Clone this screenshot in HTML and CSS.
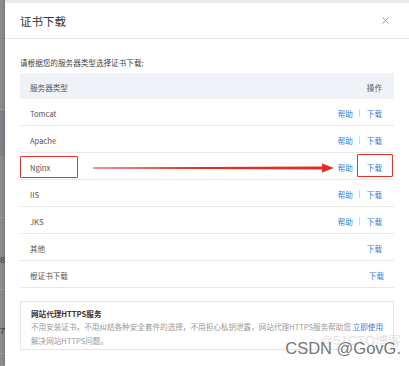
FILE: index.html
```html
<!DOCTYPE html>
<html lang="zh-CN">
<head>
  <meta charset="UTF-8">
  <title>证书下载</title>
  <link rel="stylesheet" href="styles.css">
</head>
<body>
  <div class="screen">
    <div class="backdrop">
      <div class="bd-seg bd-a"></div>
      <div class="bd-seg bd-b"></div>
      <div class="bd-seg bd-c"></div>
      <div class="bd-seg bd-d"><span>8</span></div>
      <div class="bd-seg bd-e"><span>7</span></div>
      <div class="bd-seg bd-f"></div>
    </div>

    <div class="dialog">
      <div class="dialog-head">
        <h2>证书下载</h2>
        <svg class="close" width="7" height="7" viewBox="0 0 7 7">
          <path d="M0.5 0.5 L6.5 6.5 M6.5 0.5 L0.5 6.5" stroke="#9a9a9a" stroke-width="1" fill="none"/>
        </svg>
      </div>

      <div class="dialog-body">
        <p class="tip">请根据您的服务器类型选择证书下载:</p>

        <div class="cert-table">
          <div class="row row-head">
            <span class="name">服务器类型</span>
            <span class="ops">操作</span>
          </div>
          <div class="row">
            <span class="name">Tomcat</span>
            <span class="ops"><a href="#">帮助</a><i class="sep"></i><a href="#">下载</a></span>
          </div>
          <div class="row">
            <span class="name">Apache</span>
            <span class="ops"><a href="#">帮助</a><i class="sep"></i><a href="#">下载</a></span>
          </div>
          <div class="row row-marked">
            <span class="name">Nginx</span>
            <span class="ops"><a href="#">帮助</a><i class="sep hidden"></i><a href="#">下载</a></span>
            <div class="mark mark-name"></div>
            <div class="mark mark-dl"></div>
            <svg class="arrow" width="242" height="12" viewBox="0 0 242 12">
              <polygon points="0,5.6 229,4.6 229,1.5 241,6 229,10.5 229,7.6 0,6.6" fill="#e62b22"/>
            </svg>
          </div>
          <div class="row">
            <span class="name">IIS</span>
            <span class="ops"><a href="#">帮助</a><i class="sep"></i><a href="#">下载</a></span>
          </div>
          <div class="row">
            <span class="name">JKS</span>
            <span class="ops"><a href="#">帮助</a><i class="sep"></i><a href="#">下载</a></span>
          </div>
          <div class="row">
            <span class="name">其他</span>
            <span class="ops"><a href="#">下载</a></span>
          </div>
          <div class="row row-root">
            <span class="name">根证书下载</span>
            <span class="ops"><a href="#">下载</a></span>
          </div>
        </div>

        <div class="proxy">
          <div class="proxy-title">网站代理HTTPS服务</div>
          <div class="proxy-desc">
            <p>不用安装证书，不用纠结各种安全套件的选择，不用担心私钥泄露，网站代理HTTPS服务帮助您<br>解决网站HTTPS问题。</p>
            <a href="#">立即使用</a>
          </div>
        </div>
      </div>

      <div class="watermark">
        <span class="wm-back">@51CTO博客</span>
        <span class="wm-front">CSDN @GovG.</span>
      </div>
    </div>
  </div>
</body>
</html>
```

FILE: styles.css
```css
body {
  margin: 0;
  background: #ffffff;
  font-family: "Noto Sans CJK SC", "Liberation Sans", sans-serif;
  color: #444;
}
.screen {
  display: flex;
  height: 366px;
  overflow: hidden;
}

/* page behind the dialog */
.backdrop {
  width: 5px;
  flex: none;
  display: flex;
  flex-direction: column;
  background: #8b8b8b;
  overflow: hidden;
}
.bd-seg {
  position: relative;
  border-bottom: 1px solid #9c9c9c;
}
.bd-a { height: 109px; }
.bd-b { height: 46px; background: #7f8186; border-bottom: none; }
.bd-c { height: 61px; }
.bd-d { height: 71px; }
.bd-e { height: 63px; }
.bd-f { flex: 1; }
.bd-seg span {
  position: absolute;
  left: 0;
  font-family: "Liberation Sans", sans-serif;
  font-size: 9px;
  color: #3c3c3c;
  line-height: 10px;
}
.bd-d span { top: 37px; }
.bd-e span { top: 36px; }

.dialog {
  flex: 1;
  position: relative;
  border-top: 3px solid #ebebeb;
  box-shadow: -1px 0 2px rgba(0, 0, 0, 0.15);
}

.dialog-head {
  height: 35px;
  display: flex;
  align-items: center;
  justify-content: space-between;
  padding: 0 20px 0 15px;
  border-bottom: 1px solid #e6e6e6;
}
.dialog-head h2 {
  margin: 0;
  font-size: 11.5px;
  font-weight: normal;
  color: #333;
  line-height: 14px;
}
.close {
  display: block;
}

.dialog-body {
  padding: 18px 15px 0 15px;
}
.tip {
  margin: 0 0 4px 0;
  font-size: 7.6px;
  line-height: 12px;
  color: #444;
}

.cert-table {
  font-size: 7.6px;
}
.row {
  position: relative;
  display: flex;
  align-items: center;
  justify-content: space-between;
  height: 26px;
  padding: 0 12px 0 10px;
  border-bottom: 1px solid #e8e8e8;
  color: #555;
}
.row-head {
  background: #eff2f7;
  border-bottom: none;
}
.row .name {
  padding-top: 2px;
}
.ops {
  display: flex;
  align-items: center;
  padding-top: 2px;
}
.ops a {
  color: #2f7ed8;
  text-decoration: none;
}
.sep {
  width: 1px;
  height: 8px;
  margin: 0 7px 0 6px;
  background: #d6d6d6;
}
.sep.hidden {
  background: transparent;
}
.row-root .ops {
  margin-right: -2px;
}

/* red annotations drawn over the Nginx row */
.mark {
  position: absolute;
  border: 1.5px solid #e8312a;
  border-radius: 1px;
}
.mark-name {
  left: 0;
  top: 3px;
  width: 56px;
  height: 20px;
}
.mark-dl {
  left: 337px;
  top: 1px;
  width: 34px;
  height: 21px;
}
.arrow {
  position: absolute;
  left: 73px;
  top: 9px;
}

.proxy {
  margin-top: 13px;
  border: 1px solid #e4e4e4;
  padding: 6px 10px 2px 10px;
}
.proxy-title {
  font-size: 7.6px;
  font-weight: bold;
  line-height: 12px;
  color: #333;
}
.proxy-desc {
  display: flex;
  align-items: flex-start;
  justify-content: space-between;
}
.proxy-desc p {
  margin: 0;
  font-size: 7.6px;
  line-height: 13.5px;
  color: #9a9a9a;
  white-space: nowrap;
}
.proxy-desc a {
  font-size: 7.6px;
  line-height: 13.5px;
  color: #2f7ed8;
  text-decoration: none;
}

.watermark {
  position: absolute;
  right: 8px;
  bottom: 8px;
  font-family: "Liberation Sans", sans-serif;
}
.wm-back {
  position: absolute;
  right: 0;
  top: -9px;
  font-size: 13px;
  color: #e4e4e4;
  white-space: nowrap;
}
.wm-front {
  position: relative;
  font-size: 16.5px;
  color: #767676;
  white-space: nowrap;
  text-shadow: 0 0 1px #fff, 0 0 1px #fff;
}
```
